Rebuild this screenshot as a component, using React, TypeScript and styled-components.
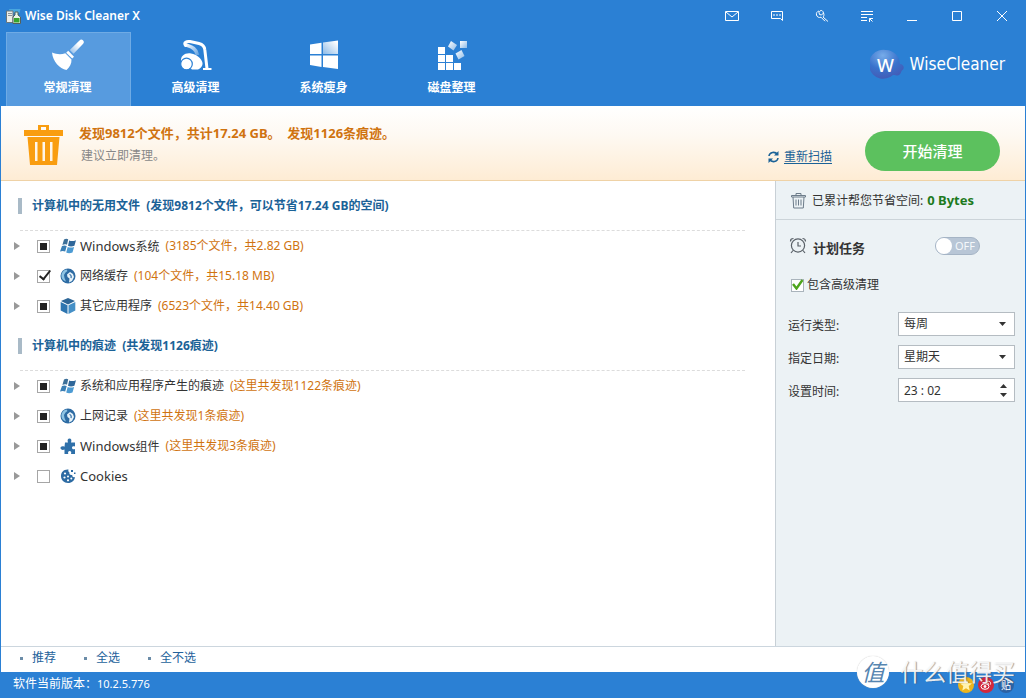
import React, { useEffect, useRef, useState } from "react";
import styled, { createGlobalStyle, css } from "styled-components";

const font = `"Noto Sans", "Noto Sans CJK SC", sans-serif`;
const blue = "#2b80d4";

const GlobalStyle = createGlobalStyle`
  *, *::before, *::after { box-sizing: border-box; }
  body { margin: 0; background: ${blue}; }
  body, button, input, select { font-family: ${font}; font-size: 12px; line-height: 18px; color: #333; }
  button { border: 0; padding: 0; background: none; cursor: pointer; }
  h1, h2, p, ul { margin: 0; padding: 0; font-size: 12px; }
  ul { list-style: none; }
  svg { display: block; flex: none; }
`;

const Window = styled.div`
  position: relative;
  display: flex;
  flex-direction: column;
  min-height: 100vh;
  padding: 0 1px;
  background: ${blue};
  overflow: hidden;
`;

/* ---------- header ---------- */

const TitleBar = styled.header`
  display: flex;
  align-items: center;
  height: 32px;
  padding: 0 1px 0 5px;
`;

const AppName = styled.h1`
  flex: 1;
  margin-left: 4px;
  color: #fff;
  font-size: 12px;
  font-weight: 600;
`;

const WindowButton = styled.button`
  display: grid;
  place-items: center;
  width: 45px;
  height: 32px;
  color: #fff;
`;

const Toolbar = styled.div`
  display: flex;
  align-items: center;
  justify-content: space-between;
  padding: 0 20px 0 5px;
`;

const Tabs = styled.nav`
  display: flex;
  gap: 3px;
`;

const Tab = styled.button<{ $active?: boolean }>`
  display: flex;
  flex-direction: column;
  align-items: center;
  gap: 7px;
  width: 125px;
  height: 74px;
  padding: 5px 2px 0 0;
  border: 1px solid transparent;
  border-bottom: 0;
  color: #fff;
  font-weight: 700;
  ${(p) => p.$active && css`
    background: #579bdf;
    border-color: #6fabe5;
  `}
`;

const Brand = styled.div`
  display: flex;
  align-items: center;
  gap: 4px;
  padding-bottom: 10px;
  color: #fff;
  font-family: "DejaVu Sans Condensed", "DejaVu Sans", sans-serif;
  font-size: 17px;
  line-height: 24px;
`;

/* ---------- banner ---------- */

const Banner = styled.section`
  display: flex;
  align-items: center;
  height: 75px;
  padding: 4px 25px 0 22px;
  border-bottom: 1px solid #efd2a6;
  background: linear-gradient(#ffffff, #fef9f2 40%, #feecd4);
`;

const BannerText = styled.div`
  flex: 1;
  margin-left: 15px;
  padding-bottom: 3px;
`;

const BannerTitle = styled.p`
  color: #d0730f;
  font-size: 13px;
  font-weight: 700;
  line-height: 24px;
  white-space: pre-wrap;
`;

const BannerHint = styled.p`
  padding-left: 2px;
  color: #888;
  line-height: 22px;
`;

const Rescan = styled.a`
  display: flex;
  align-items: center;
  gap: 5px;
  margin: 24px 33px 0 0;
  color: #1b6297;
  text-decoration: none;
  span { text-decoration: underline; text-underline-offset: 2px; }
`;

const StartButton = styled.button`
  width: 135px;
  height: 40px;
  margin-top: 12px;
  border-radius: 20px;
  background: #5cc15e;
  color: #fff;
  font-size: 15px;
  font-weight: 500;
`;

/* ---------- file and trace lists ---------- */

const Body = styled.div`
  display: flex;
  flex: 1;
  background: #fff;
`;

const Main = styled.main`
  flex: 1;
  min-width: 0;
`;

const GroupTitle = styled.h2`
  display: flex;
  align-items: center;
  gap: 10px;
  height: 50px;
  margin: 0 30px 0 19px;
  border-bottom: 1px dashed #dcdcdc;
  color: #1b6297;
  font-size: 12px;
  white-space: pre-wrap;
  &::before {
    content: "";
    width: 4px;
    height: 16px;
    margin-left: -2px;
    background: #a9bac7;
  }
`;

const Row = styled.li`
  display: flex;
  align-items: center;
  height: 30px;
  padding-left: 13px;
`;

const Expander = styled.button`
  width: 5px;
  height: 8px;
  margin-right: 18px;
`;

const Box = styled.input`
  appearance: none;
  display: grid;
  place-items: center;
  flex: none;
  width: 13px;
  height: 13px;
  margin: 1px 10px 0 0;
  border: 1px solid #a6a6a6;
  background: #fff;
  &:indeterminate::before {
    content: "";
    width: 7px;
    height: 7px;
    background: #222;
  }
  &:checked::before {
    content: "";
    width: 6px;
    height: 12px;
    margin: -5px 0 0 2px;
    border: solid #222;
    border-width: 0 2px 2px 0;
    transform: rotate(38deg);
  }
`;

const RowLabel = styled.label`
  display: flex;
  align-items: center;
  gap: 4px;
`;

const Latin = styled.span`
  font-size: 13px;
`;

const Count = styled.span`
  margin-left: 2px;
  color: #d0730f;
`;

/* ---------- sidebar ---------- */

const Side = styled.aside`
  width: 250px;
  border-left: 1px solid #c8d0d6;
  background: #ecf2f5;
`;

const Saved = styled.p`
  display: flex;
  align-items: center;
  gap: 6px;
  height: 39px;
  padding-left: 15px;
  border-bottom: 1px solid #ccd4d9;
  strong { color: #1d7a1d; font-size: 13px; margin-left: 4px; }
`;

const Schedule = styled.section`
  padding: 15px 10px 0 12px;
`;

const ScheduleHead = styled.div`
  display: flex;
  align-items: center;
  padding-right: 35px;
`;

const ScheduleTitle = styled.h2`
  flex: 1;
  margin: 4px 0 0 6px;
  font-size: 13px;
`;

const Switch = styled.label`
  display: flex;
  align-items: center;
  width: 45px;
  height: 18px;
  padding: 0;
  border: 1px solid #a5b4c5;
  border-radius: 9px;
  background: #b8c6d6;
  color: #f4f8fb;
  font-size: 11px;
  input {
    appearance: none;
    width: 16px;
    height: 16px;
    margin: 0 3px 0 0;
    border-radius: 50%;
    background: #fff;
  }
`;

const Include = styled.label`
  display: flex;
  align-items: center;
  gap: 3px;
  margin: 19px 0 18px 3px;
  position: relative;
  input {
    appearance: none;
    width: 13px;
    height: 13px;
    margin: 0;
    border: 1px solid #aab4bc;
    background: #fff;
  }
  svg { position: absolute; left: 1px; top: 3px; pointer-events: none; opacity: 0; }
  input:checked + svg { opacity: 1; }
`;

const Field = styled.div`
  display: flex;
  align-items: center;
  justify-content: space-between;
  margin-bottom: 9px;
  > label { padding-top: 4px; }
`;

const Control = styled.div`
  display: flex;
  align-items: center;
  width: 117px;
  height: 24px;
  border: 1px solid #b5bcc2;
  background: #fff;
  position: relative;
  > svg { position: absolute; right: 8px; pointer-events: none; }
  select, input {
    appearance: none;
    width: 100%;
    height: 22px;
    padding: 0 5px;
    border: 0;
    outline: 0;
    background: none;
  }
`;

const Spinner = styled.div`
  display: flex;
  flex-direction: column;
  gap: 5px;
  padding-right: 7px;
`;

/* ---------- footer ---------- */

const Selectors = styled.div`
  display: flex;
  align-items: center;
  gap: 28px;
  height: 26px;
  padding: 0 0 3px 19px;
  border-top: 1px solid #ccd6de;
  background: #fff;
`;

const Selector = styled.button`
  display: flex;
  align-items: center;
  gap: 9px;
  color: #24629b;
  &::before { content: ""; width: 3px; height: 3px; background: #6b8ca8; }
`;

const Status = styled.footer`
  display: flex;
  align-items: center;
  justify-content: space-between;
  height: 26px;
  padding: 0 11px 0 12px;
  color: #fff;
  font-size: 12px;
  p { font-weight: 400; padding-bottom: 2px; }
  small { font-size: 11px; }
`;

const Share = styled.div`
  display: flex;
  gap: 4px;
`;

const ShareLink = styled.a<{ $color: string }>`
  display: grid;
  place-items: center;
  width: 16px;
  height: 16px;
  border-radius: 50%;
  background: ${(p) => p.$color};
  color: #fff;
  font-size: 10px;
  line-height: 16px;
  text-decoration: none;
`;

const Watermark = styled.div`
  position: absolute;
  right: 11px;
  bottom: 10px;
  display: flex;
  align-items: center;
  gap: 11px;
  color: rgba(255, 255, 255, 0.88);
  font-size: 23px;
  line-height: 32px;
  text-shadow: 1px 0 1px rgba(70, 70, 70, 0.55);
  pointer-events: none;
`;

const Seal = styled.span`
  display: grid;
  place-items: center;
  width: 32px;
  height: 32px;
  border-radius: 50%;
  background: #fff;
  color: #5685b0;
  font-size: 23px;
  font-style: italic;
  text-shadow: none;
  box-shadow: 0 0 1px #bbb;
`;

/* ---------- drawings ---------- */

const AppIcon = () => (
  <svg width="15" height="16" viewBox="0 0 15 16">
    <path d="M3 1h11.500l-1 4H4z" fill="#48a7df" />
    <path d="M.5 3h6.500v11.500H.5z" fill="#eceeea" stroke="#69777d" />
    <path d="M2 5.500h4M2 7.500h4" stroke="#8c9599" />
    <path d="M9 4h3v3l2.500 2v6.500H7V9l2-2z" fill="#e9f5e6" stroke="#53605b" />
    <path d="M8 10h5.500v4.500H8z" fill="#37a42d" />
  </svg>
);

const Broom = () => (
  <svg width="34" height="34" viewBox="0 0 34 34">
    <defs>
      <linearGradient id="handle" x1="1" y1="0" x2="0" y2="1">
        <stop offset=".35" stopColor="#fff" />
        <stop offset="1" stopColor="#fff" stopOpacity=".3" />
      </linearGradient>
    </defs>
    <path d="M28.500 2.500a2.400 2.400 0 0 1 3.700 3.300L22.500 15.700 18.800 12z" fill="url(#handle)" />
    <path d="M17.200 12.700l5.800 6-1.800 1.800-6-5.800z" fill="#fff" />
    <path d="M14.300 15.200l6.200 6.300c.2 4-1.800 7.500-5 10.500C8.500 30.500 2 24 1 14.500c4.500 1.800 9 2.300 13.300.7z" fill="#fff" />
  </svg>
);

const Vacuum = () => (
  <svg width="34" height="34" viewBox="0 0 34 34" fill="none">
    <defs>
      <linearGradient id="hose" x1="0" y1="0" x2="1" y2="1">
        <stop offset="0" stopColor="#fff" />
        <stop offset="1" stopColor="#fff" stopOpacity=".3" />
      </linearGradient>
    </defs>
    <path d="M6 6.500C10 8.500 17 9 18.500 17" stroke="url(#hose)" strokeWidth="3.500" />
    <path d="M6.500 7.500C4.500 4.500 7.500 3 11 3.500l9 2c4 1 5.500 3 5.800 6.200L28 30.500" stroke="#fff" strokeWidth="3" strokeLinecap="round" />
    <path d="M24 30h8.500v2H24z" fill="#fff" />
    <path d="M2 23c-.5-5 4-8.500 10-7.500 6 1 10.500 5 11.500 9.500.3 3-2 5.500-4.500 6.500h-6z" fill="#fff" />
    <circle cx="7.500" cy="26" r="5.800" fill="#fff" stroke={blue} strokeWidth="1.200" />
  </svg>
);

const WindowsLogo = () => (
  <svg width="34" height="34" viewBox="0 0 34 34">
    <defs>
      <linearGradient id="pane" x1="1" y1="0" x2="0" y2="1">
        <stop offset=".1" stopColor="#fff" />
        <stop offset="1" stopColor="#8dbbe8" />
      </linearGradient>
    </defs>
    <path d="M3 6.500L14.500 4.700V16H3zM3 17.500h11.500V29L3 27zM16 17.500h15V31l-15-2z" fill="#fff" />
    <path d="M16 4.500L31 2.500V16H16z" fill="url(#pane)" />
  </svg>
);

const Blocks = () => (
  <svg width="34" height="34" viewBox="0 0 34 34" fill="#fff">
    <defs>
      <linearGradient id="block" x1="0" y1="0" x2="1" y2="1">
        <stop offset="0" stopColor="#fff" />
        <stop offset="1" stopColor="#8dbbe8" />
      </linearGradient>
    </defs>
    <path d="M3 9h7v7H3zM3 17h7v7H3zM3 25h7v7H3zM11 17h7v7h-7zM11 25h7v7h-7zM19 25h7v7h-7z" />
    <g fill="url(#block)">
      <path d="M25 3h7v7h-7z" />
      <path d="M16 3l6 4-3.500 5.500-5.500-4z" />
      <path d="M20.500 15.500l6-3.500 3 6-6 3.500z" />
    </g>
  </svg>
);

const BrandLogo = () => (
  <svg width="36" height="32" viewBox="0 0 36 32">
    <defs>
      <radialGradient id="orb" cx=".4" cy=".2" r=".85">
        <stop offset="0" stopColor="#77ace9" />
        <stop offset=".55" stopColor="#3972cc" />
        <stop offset="1" stopColor="#4459b4" />
      </radialGradient>
    </defs>
    <path d="M16 2a14.500 14.500 0 0 1 14 14c4 0 5 5 2 6.500-1 1-1 4-4 5-2 .5-3-1-5-.5A14.500 14.500 0 1 1 16 2z" fill="url(#orb)" />
    <text x="15.500" y="24" textAnchor="middle" fill="#fff" fontSize="18" fontFamily="Noto Sans" fontWeight="500">W</text>
  </svg>
);

const OrangeBin = () => (
  <svg width="41" height="42" viewBox="0 0 41 42">
    <path fill="#f99d10" fillRule="evenodd" d="M15 1h11v5h14v6H1V6h14zM18 3v3h5V3zM4.500 13h32L34 41H7zM12 18v19h2.500V18zM19.500 18v19H22V18zM27 18v19h2.500V18z" />
  </svg>
);

const GreyBin = () => (
  <svg width="15" height="17" viewBox="0 0 15 17" fill="none" stroke="#6d7c8a">
    <path d="M.5 5V3.500h14V5zM5 3.500v-2h5v2M2 5l.7 11h9.600L13 5M5 7.500v6M7.500 7.500v6M10 7.500v6" />
  </svg>
);

const Clock = () => (
  <svg width="19" height="18" viewBox="0 0 19 18" fill="none" stroke="#5a6168" strokeWidth="1.200">
    <circle cx="10" cy="8.500" r="6.600" />
    <path d="M10 5v4h3M2.500 4.500c0-2 .8-3 3-3M14.500 1.500c2.200 0 3 1 3 3M5 13.500L3 16M15 13.500l2 2.500" />
  </svg>
);

const Refresh = () => (
  <svg width="11" height="12" viewBox="0 0 11 12" fill="none" stroke="#1b6297" strokeWidth="1.600">
    <path d="M1 5c.5-4 6-5 8.500-1.500M10 7c-.5 4-6 5-8.500 1.500" />
    <path d="M10.500 0v4.500H6zM.5 12V7.500H5z" fill="#1b6297" stroke="none" />
  </svg>
);

const rowIcons = {
  windows: (
    <g>
      <path d="M4 1.500c1.500-1 3-1 4.200-.2L7 6.800c-1.500-.7-3-.6-4.600.2z" fill="#3d7099" />
      <path d="M9.200 2.500c2 .9 4.200.8 6.800-.3l-1.600 5.500c-2.200 1-4.400 1-6.400.1z" fill="#2f679a" />
      <path d="M2 8c1.700-.8 3.200-.8 4.700 0l-1.500 5.500c-1.700-.8-3.400-.8-5.200.1z" fill="#3b7fb5" />
      <path d="M7.700 8.900c2 .9 4.200.9 6.400 0l-1.600 5.500c-2.200 1-4.300 1-6.300.1z" fill="#4c9bd3" />
    </g>
  ),
  globe: (
    <g>
      <circle cx="8" cy="8" r="7.500" fill="#2d6ba3" />
      <path d="M1.500 6.500C2 4 4 2 6.500 1.600L7.500 3 5.500 4.500 4 7l.5 3L6 13.500C3 12.500 1 10 1.500 6.500z" fill="#8fc4e3" />
      <path d="M7 6.500l3-2.500 3 2 1 3-2 4-3 1.500.5-4L7.500 9z" fill="#e6f2f9" />
      <path d="M9.500 6.500c1.500.3 2 1.500 1.500 3.500" fill="none" stroke="#2d6ba3" strokeWidth="1.200" />
    </g>
  ),
  cube: (
    <g>
      <path d="M8 0l7 3-7 3.500L1 3z" fill="#2d6697" />
      <path d="M.7 4l6.800 3.300V16L.7 12.500z" fill="#2d75b0" />
      <path d="M15.300 4L8.500 7.300V16l6.800-3.500z" fill="#4590c7" />
    </g>
  ),
  puzzle: (
    <path fill="#2f70a9" d="M5 4.500h3C7 2 8 .5 9.500.5S12 2 11 4.500h4v4c-2-.8-3 .1-3 1.200s1 2 3 1.200V16h-4c.8-2-.2-3-1.300-3S7.500 14 8.300 16H4.500v-4.500C2.500 12.500.5 11.500.5 10s1.700-2.300 4-1.300z" />
  ),
  cookie: (
    <g>
      <path d="M8.500 1.500C4 1 1 4 1 8s3 7 7 7 6.500-2.500 7-6c-2 .7-3-.5-2.700-2C10 7.500 9 6 9.500 4.500 8.500 4 8 2.700 8.500 1.500z" fill="#2d6ba3" />
      <g fill="#fff">
        <circle cx="5" cy="5.500" r="1.100" />
        <circle cx="4.500" cy="9.500" r="1.100" />
        <circle cx="8" cy="8.500" r="1" />
        <circle cx="8" cy="12.300" r="1.100" />
        <circle cx="11.300" cy="10.500" r="1" />
      </g>
      <path d="M11 2h2v2h-2zM14 4.500h1.500V6H14z" fill="#2d6ba3" />
    </g>
  ),
};

type Item = {
  id: string;
  icon: keyof typeof rowIcons;
  latin?: string;
  label: string;
  count?: string;
  state: "partial" | "on" | "off";
};

const groups: { title: string; items: Item[] }[] = [
  {
    title: "计算机中的无用文件  (发现9812个文件，可以节省17.24 GB的空间)",
    items: [
      { id: "system", icon: "windows", latin: "Windows", label: "系统", count: "(3185个文件，共2.82 GB)", state: "partial" },
      { id: "cache", icon: "globe", label: "网络缓存", count: "(104个文件，共15.18 MB)", state: "on" },
      { id: "apps", icon: "cube", label: "其它应用程序", count: "(6523个文件，共14.40 GB)", state: "partial" },
    ],
  },
  {
    title: "计算机中的痕迹  (共发现1126痕迹)",
    items: [
      { id: "traces", icon: "windows", label: "系统和应用程序产生的痕迹", count: "(这里共发现1122条痕迹)", state: "partial" },
      { id: "history", icon: "globe", label: "上网记录", count: "(这里共发现1条痕迹)", state: "partial" },
      { id: "components", icon: "puzzle", latin: "Windows", label: "组件", count: "(这里共发现3条痕迹)", state: "partial" },
      { id: "cookies", icon: "cookie", latin: "Cookies", label: "", state: "off" },
    ],
  },
];

const tabs = [
  { label: "常规清理", Icon: Broom },
  { label: "高级清理", Icon: Vacuum },
  { label: "系统瘦身", Icon: WindowsLogo },
  { label: "磁盘整理", Icon: Blocks },
];

const windowButtons = [
  { label: "邮件", path: "M1.500 3.500h13v9h-13zM2 4l6 5 6-5" },
  { label: "反馈", path: "M2.500 3.500h11v9l-2-2h-9zM4 7h2M7 7h2M10 7h2" },
  { label: "设置", path: "M6.500 2.500l-1.500 2 .5 2 2 .5 2-2c.8 1.700.5 3-.5 4M6.500 2.500c1-.3 2.500.2 3 2.500M5 3C3 3.500 2 5 2.500 7s2.500 3 4.500 2.200l4 4M9 9l5 4.500" },
  { label: "菜单", path: "M2 3.500h12M2 6.500h12M2 9.500h6M2 12.500h6M13.500 13.500l-3-3M10.500 14v-3.500h3.500" },
  { label: "最小化", path: "M3 12.500h10" },
  { label: "最大化", path: "M3.500 3.500h9v9h-9z" },
  { label: "关闭", path: "M3 3l10 10M13 3L3 13" },
];

function Entry({ item }: { item: Item }) {
  const box = useRef<HTMLInputElement>(null);
  useEffect(() => {
    if (box.current) box.current.indeterminate = item.state === "partial";
  }, [item.state]);
  return (
    <Row>
      <Expander aria-label={`展开${item.latin ?? ""}${item.label}`}>
        <svg width="6" height="8" viewBox="0 0 6 8"><path d="M0 0l6 4-6 4z" fill="#999" /></svg>
      </Expander>
      <Box ref={box} id={item.id} type="checkbox" defaultChecked={item.state === "on"} />
      <RowLabel htmlFor={item.id}>
        <svg width="16" height="16" viewBox="0 0 16 16">{rowIcons[item.icon]}</svg>
        <span>{item.latin && <Latin>{item.latin}</Latin>}{item.label}</span>
        {item.count && <Count>{item.count}</Count>}
      </RowLabel>
    </Row>
  );
}

const DownArrow = () => (
  <svg width="7" height="4" viewBox="0 0 7 4"><path d="M0 0h7L3.500 4z" fill="#333" /></svg>
);

export default function App() {
  const [active, setActive] = useState(0);
  return (
    <>
      <GlobalStyle />
      <Window>
        <TitleBar>
          <AppIcon />
          <AppName>Wise Disk Cleaner X</AppName>
          {windowButtons.map((b) => (
            <WindowButton key={b.label} aria-label={b.label}>
              <svg width="16" height="16" viewBox="0 0 16 16" fill="none" stroke="#fff"><path d={b.path} /></svg>
            </WindowButton>
          ))}
        </TitleBar>
        <Toolbar>
          <Tabs>
            {tabs.map(({ label, Icon }, i) => (
              <Tab key={label} $active={i === active} onClick={() => setActive(i)}>
                <Icon />
                {label}
              </Tab>
            ))}
          </Tabs>
          <Brand><BrandLogo />WiseCleaner</Brand>
        </Toolbar>

        <Banner>
          <OrangeBin />
          <BannerText>
            <BannerTitle>{"发现9812个文件，共计17.24 GB。  发现1126条痕迹。"}</BannerTitle>
            <BannerHint>建议立即清理。</BannerHint>
          </BannerText>
          <Rescan href="#rescan"><Refresh /><span>重新扫描</span></Rescan>
          <StartButton>开始清理</StartButton>
        </Banner>

        <Body>
          <Main>
            {groups.map((g) => (
              <section key={g.title}>
                <GroupTitle>{g.title}</GroupTitle>
                <ul>{g.items.map((item) => <Entry key={item.id} item={item} />)}</ul>
              </section>
            ))}
          </Main>
          <Side>
            <Saved><GreyBin /><span>已累计帮您节省空间:<strong>0 Bytes</strong></span></Saved>
            <Schedule>
              <ScheduleHead>
                <Clock />
                <ScheduleTitle>计划任务</ScheduleTitle>
                <Switch><input type="checkbox" role="switch" aria-label="计划任务" />OFF</Switch>
              </ScheduleHead>
              <Include>
                <input type="checkbox" defaultChecked />
                <svg width="12" height="11" viewBox="0 0 12 11"><path d="M1 5l3.500 4.500L10.500 1" fill="none" stroke="#4da51d" strokeWidth="2.400" /></svg>
                包含高级清理
              </Include>
              <Field>
                <label htmlFor="kind">运行类型:</label>
                <Control><select id="kind"><option>每周</option></select><DownArrow /></Control>
              </Field>
              <Field>
                <label htmlFor="day">指定日期:</label>
                <Control><select id="day"><option>星期天</option></select><DownArrow /></Control>
              </Field>
              <Field>
                <label htmlFor="time">设置时间:</label>
                <Control>
                  <input id="time" defaultValue="23 : 02" />
                  <Spinner>
                    <button aria-label="增加"><svg width="7" height="4" viewBox="0 0 7 4"><path d="M0 4h7L3.500 0z" fill="#333" /></svg></button>
                    <button aria-label="减少"><DownArrow /></button>
                  </Spinner>
                </Control>
              </Field>
            </Schedule>
          </Side>
        </Body>

        <Selectors>
          <Selector>推荐</Selector>
          <Selector>全选</Selector>
          <Selector>全不选</Selector>
        </Selectors>
        <Status>
          <p>软件当前版本：<small>10.2.5.776</small></p>
          <Share>
            <ShareLink href="#qzone" aria-label="QQ空间" $color="#edb51d">
              <svg width="12" height="12" viewBox="0 0 12 12"><path d="M6 0l1.700 4 4.300.4-3.300 2.700 1 4.400L6 9.200l-3.700 2.300 1-4.400L0 4.400 4.300 4z" fill="#fff3b0" /></svg>
            </ShareLink>
            <ShareLink href="#weibo" aria-label="微博" $color="#d3283c">
              <svg width="12" height="12" viewBox="0 0 12 12" fill="none" stroke="#fff"><ellipse cx="5" cy="7.500" rx="4" ry="2.800" /><circle cx="5" cy="7.500" r="1" fill="#fff" /><path d="M7 2.500c2.500-1 4 .5 3.500 3M7.500 4.500c1-.3 1.500.2 1.300 1.200" /></svg>
            </ShareLink>
            <ShareLink href="#tieba" $color="#2d62a3">贴</ShareLink>
          </Share>
        </Status>
        <Watermark><Seal>值</Seal>什么值得买</Watermark>
      </Window>
    </>
  );
}
